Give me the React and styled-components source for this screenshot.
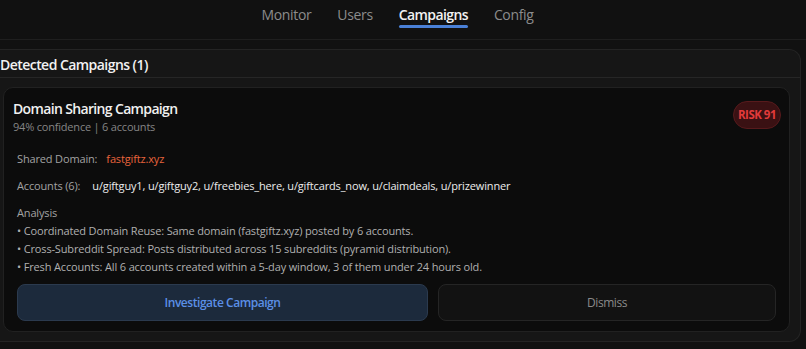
import styled, { createGlobalStyle } from "styled-components";

const GlobalStyle = createGlobalStyle`
  html, body {
    margin: 0;
    padding: 0;
    background: #111111;
  }
  body {
    font-family: "Open Sans", "Liberation Sans", sans-serif;
    color: #e6e6e6;
  }
`;

const Page = styled.div`
  width: 806px;
  height: 349px;
  overflow: hidden;
  background: #111111;
`;

const Nav = styled.nav`
  height: 40px;
  display: flex;
  justify-content: center;
  align-items: flex-start;
  gap: 26px;
  padding-right: 11px;
  border-bottom: 1px solid #1f1f1f;
  box-sizing: border-box;
`;

const Tab = styled.div`
  padding-top: 5px;
  font-size: 14px;
  font-weight: ${({ active }) => (active ? 600 : 400)};
  color: ${({ active }) => (active ? "#f2f2f2" : "#8c8c8c")};
  letter-spacing: ${({ active }) => (active ? "-0.6px" : "-0.35px")};

  &::after {
    content: "";
    display: ${({ active }) => (active ? "block" : "none")};
    height: 3px;
    border-radius: 2px;
    background: #4a80d6;
    margin-top: 1px;
  }
`;

const Content = styled.div`
  padding: 9px 5px 0 0;
`;

const Panel = styled.section`
  background: #161616;
  border: 1px solid #242424;
  border-left: none;
  border-radius: 0 12px 12px 0;
  height: 293px;
  box-sizing: border-box;
`;

const PanelHeader = styled.h2`
  margin: 0;
  height: 28px;
  display: flex;
  align-items: center;
  padding-top: 2px;
  box-sizing: border-box;
  font-size: 14px;
  font-weight: 600;
  color: #f2f2f2;
  border-bottom: 1px solid #262626;
  letter-spacing: -0.55px;
`;

const PanelBody = styled.div`
  padding: 9px 10px 0 3px;
`;

const Card = styled.article`
  background: #0c0c0c;
  border: 1px solid #212121;
  border-radius: 10px;
  padding: 11px 13px 12px 9px;
  height: 245px;
  box-sizing: border-box;
`;

const CardHead = styled.div`
  display: flex;
  justify-content: space-between;
  align-items: flex-start;
`;

const Title = styled.h3`
  margin: 0;
  font-size: 14px;
  font-weight: 600;
  color: #f0f0f0;
  line-height: 19px;
  letter-spacing: -0.65px;
`;

const Sub = styled.div`
  margin-top: 1px;
  font-size: 11px;
  color: #858585;
  line-height: 15px;
  letter-spacing: -0.2px;
`;

const Badge = styled.span`
  margin-top: 2px;
  margin-right: -5px;
  padding: 5px 4px;
  border-radius: 14px;
  background: #3a1113;
  border: 1px solid #571a1c;
  color: #e23b3b;
  font-size: 11.5px;
  font-weight: 700;
  line-height: 16px;
  letter-spacing: -0.5px;
`;

const Details = styled.div`
  padding-left: 4px;
`;

const Row = styled.div`
  margin-top: ${({ gap }) => gap}px;
  font-size: 11px;
  line-height: 16px;
  letter-spacing: -0.15px;
  display: flex;
  gap: ${({ labelGap }) => labelGap}px;
`;

const Label = styled.span`
  color: #a3a3a3;
`;

const Value = styled.span`
  color: ${({ accent }) => (accent ? "#e8643c" : "#ececec")};
`;

const Analysis = styled.div`
  margin-top: 10px;
  font-size: 11px;
  letter-spacing: -0.15px;
  color: #b0b0b0;
`;

const AnalysisTitle = styled.div`
  color: #a3a3a3;
  line-height: 18px;
`;

const Bullet = styled.div`
  line-height: 18px;
`;

const Actions = styled.div`
  display: grid;
  grid-template-columns: 411px 1fr;
  gap: 10px;
  margin-top: 8px;
`;

const Button = styled.button`
  height: 37px;
  border-radius: 8px;
  font-family: inherit;
  font-size: 12px;
  font-weight: ${({ primary }) => (primary ? 600 : 400)};
  letter-spacing: -0.45px;
  background: ${({ primary }) => (primary ? "#1c2a3c" : "#121212")};
  border: 1px solid ${({ primary }) => (primary ? "#2b3a4e" : "#252525")};
  color: ${({ primary }) => (primary ? "#5b8fe6" : "#8a8a8a")};
  cursor: pointer;
`;

const tabs = ["Monitor", "Users", "Campaigns", "Config"];

const accounts = [
  "u/giftguy1",
  "u/giftguy2",
  "u/freebies_here",
  "u/giftcards_now",
  "u/claimdeals",
  "u/prizewinner",
];

const findings = [
  "Coordinated Domain Reuse: Same domain (fastgiftz.xyz) posted by 6 accounts.",
  "Cross-Subreddit Spread: Posts distributed across 15 subreddits (pyramid distribution).",
  "Fresh Accounts: All 6 accounts created within a 5-day window, 3 of them under 24 hours old.",
];

export default function App() {
  return (
    <Page>
      <GlobalStyle />
      <Nav>
        {tabs.map((t) => (
          <Tab key={t} active={t === "Campaigns"}>
            {t}
          </Tab>
        ))}
      </Nav>
      <Content>
        <Panel>
          <PanelHeader>Detected Campaigns (1)</PanelHeader>
          <PanelBody>
            <Card>
              <CardHead>
                <div>
                  <Title>Domain Sharing Campaign</Title>
                  <Sub>94% confidence | 6 accounts</Sub>
                </div>
                <Badge>RISK 91</Badge>
              </CardHead>
              <Details>
                <Row gap={17} labelGap={9}>
                  <Label>Shared Domain:</Label>
                  <Value accent>fastgiftz.xyz</Value>
                </Row>
                <Row gap={11} labelGap={12}>
                  <Label>Accounts (6):</Label>
                  <Value>{accounts.join(", ")}</Value>
                </Row>
                <Analysis>
                  <AnalysisTitle>Analysis</AnalysisTitle>
                  {findings.map((f) => (
                    <Bullet key={f}>• {f}</Bullet>
                  ))}
                </Analysis>
                <Actions>
                  <Button primary>Investigate Campaign</Button>
                  <Button>Dismiss</Button>
                </Actions>
              </Details>
            </Card>
          </PanelBody>
        </Panel>
      </Content>
    </Page>
  );
}
